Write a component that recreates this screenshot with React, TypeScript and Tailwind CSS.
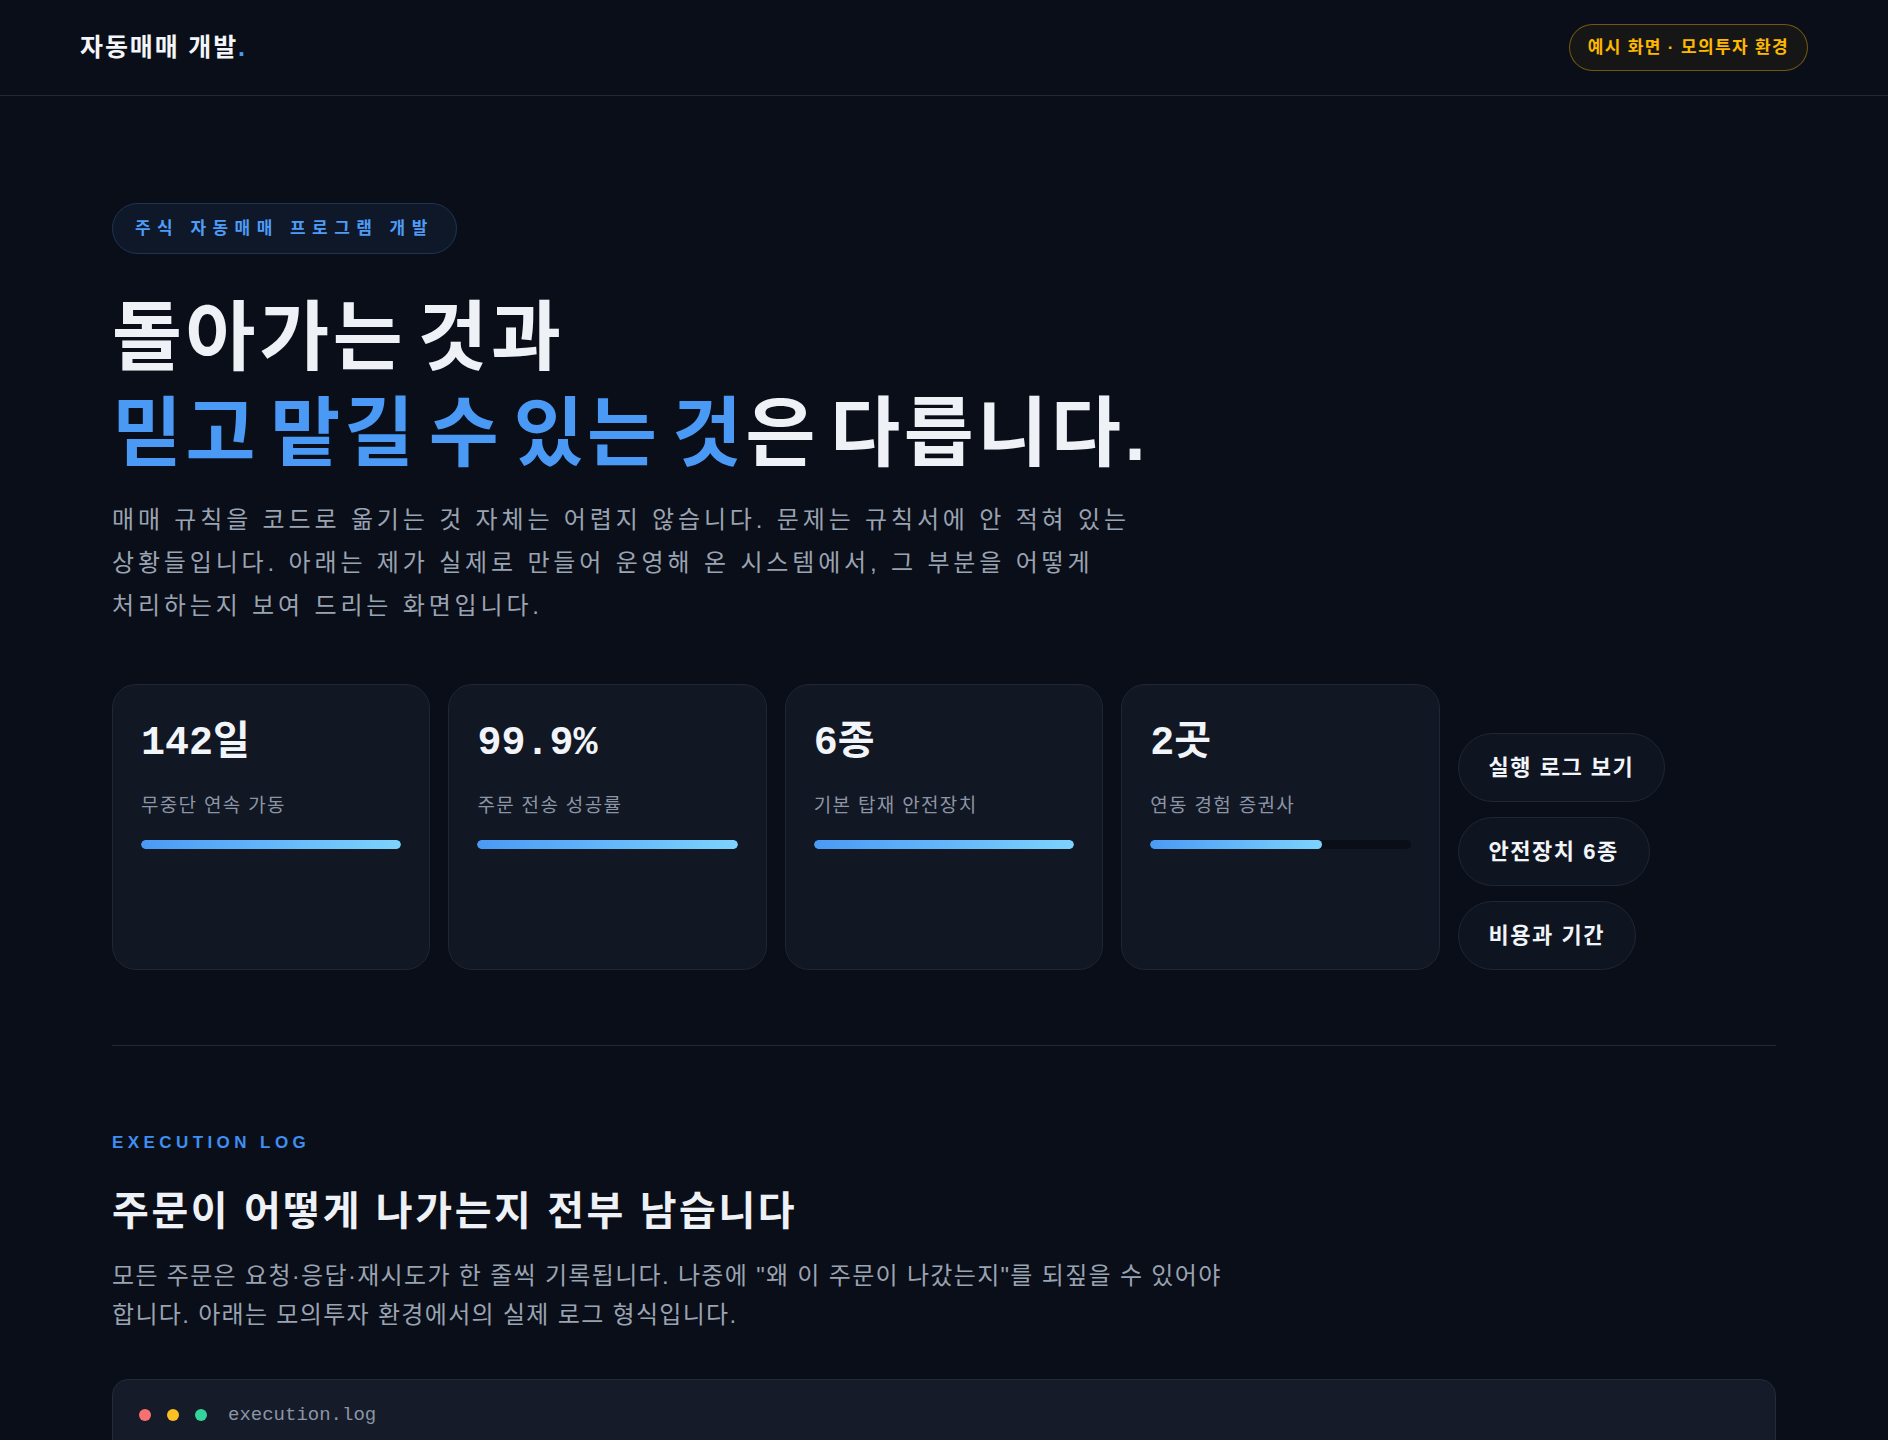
import React from "react";

const stats = [
  { value: "142일", label: "무중단 연속 가동", pct: 100 },
  { value: "99.9%", label: "주문 전송 성공률", pct: 100 },
  { value: "6종", label: "기본 탑재 안전장치", pct: 100 },
  { value: "2곳", label: "연동 경험 증권사", pct: 66 },
];

const actions = ["실행 로그 보기", "안전장치 6종", "비용과 기간"];

const logLines = [
  { t: "09:00:00.412", lv: "INFO", msg: "session.open      모의투자 계좌 연결 완료" },
  { t: "09:00:01.204", lv: "INFO", msg: "order.request     005930 매수 10주 @ 71,200" },
  { t: "09:00:01.377", lv: "WARN", msg: "order.timeout     응답 지연 1,500ms → 재시도 1/3" },
  { t: "09:00:02.019", lv: "INFO", msg: "order.filled      005930 체결 10주 @ 71,200" },
];

export default function App() {
  return (
    <div className="min-h-screen bg-[#0a0e18] text-[#eef1f6] font-['Liberation_Sans','Noto_Sans_CJK_KR',sans-serif]">
      {/* Header */}
      <header className="h-24 border-b border-[#232836] px-20 flex items-center justify-between">
        <div className="text-[25px] font-bold tracking-[0.075em] text-[#f3f5f9]">
          자동매매 개발<span className="text-[#4a9af5]">.</span>
        </div>
        <div className="h-[47px] px-[18px] flex items-center rounded-full border border-amber-400/40 bg-amber-400/5 text-amber-400 text-[17px] font-semibold tracking-[0.08em]">
          예시 화면 · 모의투자 환경
        </div>
      </header>

      <main className="px-[112px] pt-[107px]">
        {/* Hero */}
        <div className="inline-flex h-[51px] items-center rounded-full border border-[#1f3452] bg-[#0e1829] px-[22px] text-[17px] font-bold tracking-[0.38em] text-[#4f9cf6]">
          주식 자동매매 프로그램 개발
        </div>

        <h1 className="mt-9 text-[76px] leading-[96px] font-semibold tracking-[0.048em] [word-spacing:-0.178em] text-[#eef1f6]">
          돌아가는 것과
          <br />
          <span className="text-[#4a9af5]">믿고 맡길 수 있는 것</span>은 다릅니다.
        </h1>

        <p className="mt-4 text-[24px] leading-[43px] tracking-[0.16em] text-[#9aa3b2]">
          매매 규칙을 코드로 옮기는 것 자체는 어렵지 않습니다. 문제는 규칙서에 안 적혀 있는
          <br />
          상황들입니다. 아래는 제가 실제로 만들어 운영해 온 시스템에서, 그 부분을 어떻게
          <br />
          처리하는지 보여 드리는 화면입니다.
        </p>

        {/* Stats */}
        <div className="mt-[57px] grid grid-cols-5 gap-[18px]">
          {stats.map((s) => (
            <div
              key={s.label}
              className="h-[286px] rounded-3xl border border-[#1f2634] bg-[#111723] px-7 pt-[39px]"
            >
              <div className="font-['Liberation_Mono','Noto_Sans_CJK_KR',monospace] text-[40px] leading-none font-bold text-[#f1f4f8]">
                {s.value}
              </div>
              <div className="mt-7 text-[19px] leading-[28px] tracking-[0.07em] text-[#8c95a6]">{s.label}</div>
              <div className="mt-5 h-[9px] rounded-full bg-[#0a0e17] overflow-hidden">
                <div
                  className="h-full rounded-full bg-gradient-to-r from-[#4a9af5] to-[#7dd3fc]"
                  style={{ width: `${s.pct}%` }}
                />
              </div>
            </div>
          ))}

          <div className="self-end flex flex-col items-start gap-[15px]">
            {actions.map((a) => (
              <button
                key={a}
                className="h-[69px] px-[30px] rounded-full border border-[#1f2634] bg-[#0f1520] text-[22px] font-bold tracking-[0.068em] text-[#f1f4f8]"
              >
                {a}
              </button>
            ))}
          </div>
        </div>

        <hr className="mt-[75px] border-0 border-t border-[#232836]" />

        {/* Execution log */}
        <div className="mt-[85px] text-[17px] leading-[24px] font-bold tracking-[0.26em] text-[#3f8ef0]">
          EXECUTION LOG
        </div>
        <h2 className="mt-[26px] text-[40px] leading-[60px] font-bold tracking-[0.065em] text-[#eef1f6]">
          주문이 어떻게 나가는지 전부 남습니다
        </h2>
        <p className="mt-[16px] text-[24px] leading-[38.5px] tracking-[0.055em] text-[#9aa3b2]">
          모든 주문은 요청·응답·재시도가 한 줄씩 기록됩니다. 나중에 "왜 이 주문이 나갔는지"를 되짚을 수 있어야
          <br />
          합니다. 아래는 모의투자 환경에서의 실제 로그 형식입니다.
        </p>

        <div className="mt-[45px] mb-24 rounded-2xl border border-[#232a38] bg-[#151b28] overflow-hidden">
          <div className="flex items-center gap-[21px] px-[26px] h-[70px]">
            <div className="flex items-center gap-4">
              <span className="w-3 h-3 rounded-full bg-[#f87171]" />
              <span className="w-3 h-3 rounded-full bg-[#fbbf24]" />
              <span className="w-3 h-3 rounded-full bg-[#34d399]" />
            </div>
            <span className="font-['Liberation_Mono',monospace] text-[19px] text-[#8c95a6]">execution.log</span>
          </div>
          <div className="px-[26px] pb-8 font-['Liberation_Mono','Noto_Sans_CJK_KR',monospace] text-[17px] leading-[32px] text-[#c3cad6]">
            {logLines.map((l) => (
              <div key={l.t} className="whitespace-pre">
                <span className="text-[#6b7486]">{l.t}</span>{"  "}
                <span className={l.lv === "WARN" ? "text-amber-400" : "text-[#34d399]"}>{l.lv.padEnd(5)}</span>
                {l.msg}
              </div>
            ))}
          </div>
        </div>
      </main>
    </div>
  );
}
